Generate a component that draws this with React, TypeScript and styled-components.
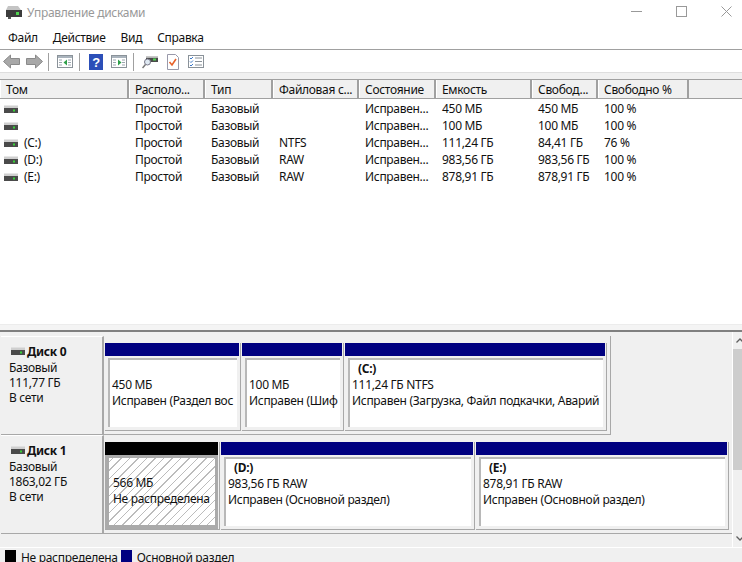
import React from "react";
import styled, { createGlobalStyle } from "styled-components";

const Global = createGlobalStyle`
  html, body { margin: 0; padding: 0; background: #fff; }
  body { width: 742px; height: 562px; overflow: hidden; font-family: "Noto Sans", "Open Sans", sans-serif; font-size: 12px; letter-spacing: -0.3px; color: #111; }
  * { box-sizing: border-box; }
`;

const Page = styled.div`
  width: 742px; height: 562px; display: flex; flex-direction: column; overflow: hidden;
`;
const TitleBar = styled.div`
  height: 27px; display: flex; align-items: center; padding-left: 6px; gap: 5px; color: #999; flex: none; overflow: hidden;
`;
const TitleText = styled.span` flex: 1; margin-top: -3px; `;
const WinButtons = styled.div`
  display: flex; align-items: center; margin-top: -5px; margin-right: -7px; flex: none;
`;
const WinButton = styled.div`
  width: 45px; height: 20px; display: flex; align-items: center; justify-content: center;
`;
const MenuBar = styled.div`
  height: 23px; display: flex; align-items: center; gap: 15px; padding: 0 0 2px 8px; border-bottom: 1px solid #a0a0a0; flex: none;
`;
const ToolBar = styled.div`
  height: 22px; display: flex; align-items: center; padding: 1px 0 0 3px; flex: none;
`;
const ToolSep = styled.div<{ $m?: number }>`
  width: 1px; height: 18px; background: #a0a0a0; margin: 0 ${(p) => p.$m ?? 6}px;
`;
const ToolIcon = styled.svg<{ $l?: number }>`
  flex: none; margin-left: ${(p) => p.$l ?? 0}px; display: block;
`;
const Band = styled.div`
  height: 8px; background: #f0f0f0; border-top: 1px solid #dedede; flex: none; border-bottom: 1px solid #a0a0a0;
`;
const TableArea = styled.div`
  height: 244px; flex: none; background: #fff;
`;
const HeaderRow = styled.div`
  height: 19px; display: flex; background: #f0f0f0; border-bottom: 1px solid #a0a0a0; margin-bottom: 1px;
`;
const HeaderCell = styled.div<{ $w: number }>`
  width: ${(p) => p.$w}px; flex: none; padding: 1px 0 0 5px; line-height: 18px; white-space: nowrap; overflow: hidden;
  border-right: 2px solid #a0a0a0; border-left: 1px solid #fff;
`;
const HeaderRest = styled.div` flex: 1; `;
const Row = styled.div`
  height: 17px; display: flex; align-items: center;
`;
const Cell = styled.div<{ $w: number }>`
  width: ${(p) => p.$w}px; flex: none; padding: 1px 0 0 6px; white-space: nowrap; overflow: hidden; line-height: 16px;
`;
const VolCell = styled(Cell)`
  display: flex; align-items: center; gap: 6px; padding-left: 4px;
`;
const Splitter = styled.div`
  height: 8px; background: #f4f4f4; border-top: 1px solid #ececec; border-bottom: 2px solid #808080; flex: none;
`;
const DiskPanel = styled.div`
  height: 216px; flex: none; background: #f0f0f0; display: flex; border-bottom: 1px solid #fff;
`;
const DiskList = styled.div`
  width: 732px; flex: none; padding-top: 4px; display: flex; flex-direction: column;
`;
const DiskRow = styled.div`
  height: 99px; display: flex; flex: none; padding-left: 1px;
`;
const DiskInfo = styled.div`
  width: 103px; flex: none; background: #f0f0f0; border-top: 1px solid #fff; border-right: 2px solid #a8a8a8; border-bottom: 1px solid #a8a8a8;
  padding: 7px 0 0 8px; line-height: 15px;
`;
const DiskName = styled.div`
  display: flex; align-items: center; gap: 2px; font-weight: 700; padding-left: 2px; margin-bottom: 1px;
`;
const Parts = styled.div<{ $open?: boolean }>`
  display: flex; gap: 1px; padding: 7px 3px 3px 1px; align-self: stretch;
  flex: ${(p) => (p.$open ? 1 : "none")};
  border-right: ${(p) => (p.$open ? "none" : "1px solid #a8a8a8")};
  border-bottom: 1px solid #a8a8a8;
`;
const Part = styled.div<{ $w: number }>`
  width: ${(p) => p.$w}px; flex: none; display: flex; flex-direction: column; background: #f0f0f0;
  border-right: 1px solid #a8a8a8; border-bottom: 1px solid #a8a8a8;
`;
const PartBar = styled.div<{ $c: string }>`
  height: 13px; background: ${(p) => p.$c}; flex: none; margin-right: 1px;
`;
const PartBody = styled.div`
  flex: 1; margin: 2px 3px 3px 3px; background: #fff; border-top: 2px solid #b8b8b8; border-left: 2px solid #b8b8b8;
  padding: 1px 0 0 2px; line-height: 16px; white-space: nowrap; overflow: hidden; display: flex; flex-direction: column;
`;
const FreeBody = styled.div`
  flex: 1; border: 3px solid #aaaaaa; border-left-width: 4px; margin-right: 1px; border-bottom-width: 4px;
  background: repeating-linear-gradient(-45deg, #fff 0, #fff 5px, #bcbcbc 5px, #bcbcbc 6px);
  padding: 17px 0 0 4px; line-height: 16px; white-space: nowrap; display: flex; flex-direction: column;
`;
const DriveLabel = styled.div`
  font-weight: 700; padding-left: 6px; min-height: 16px;
`;
const Scroll = styled.div`
  width: 10px; flex: none; border-left: 1px solid #fff; display: flex; flex-direction: column; background: #f0f0f0; overflow: hidden;
`;
const ScrollBtn = styled.div`
  height: 17px; flex: none; display: flex; align-items: center; padding-left: 3px;
`;
const ArrowGlyph = styled.svg` flex: none; `;
const Thumb = styled.div`
  height: 121px; flex: none; background: #cdcdcd;
`;
const ScrollGap = styled.div` flex: 1; `;
const Legend = styled.div`
  flex: 1; background: #f0f0f0; display: flex; align-items: flex-start; padding: 2px 0 0 5px; line-height: 16px;
`;
const Swatch = styled.span<{ $c: string; $l?: number }>`
  width: 11px; height: 13px; background: ${(p) => p.$c}; flex: none; margin-right: 5px; margin-left: ${(p) => p.$l ?? 0}px;
`;

const DriveIcon = () => (
  <svg width="14" height="9" viewBox="0 0 14 9">
    <rect x="0" y="0.5" width="14" height="2.5" fill="#cfcfcf" />
    <rect x="0" y="3" width="14" height="5" fill="#4a4a4a" />
    <rect x="9" y="4.5" width="2" height="2" fill="#36d436" />
  </svg>
);

const ArrowIcon = ({ flip, l }: { flip?: boolean; l?: number }) => (
  <ToolIcon $l={l} width="17" height="15" viewBox="0 0 17 15" style={flip ? { transform: "scaleX(-1)" } : undefined}>
    <path d="M0.5 7.5 7.5 1V4.5h9v6h-9V14z" fill="#a8a8a8" stroke="#8a8a8a" />
  </ToolIcon>
);

const PaneIcon = ({ right, l }: { right?: boolean; l?: number }) => (
  <ToolIcon $l={l} width="16" height="15" viewBox="0 0 16 15">
    <rect x="0.5" y="1.5" width="15" height="12" fill="#fff" stroke="#8a9299" />
    <rect x="1" y="2" width="14" height="2" fill="#aab4bd" />
    <path d="M2 6h3M2 8.5h3M2 11h3M11 6h3M11 8.5h3M11 11h3" stroke="#9aa5ae" />
    <path d={right ? "M7 5.5v6l3.5-3z" : "M10 5.5v6l-3.5-3z"} fill="#2fa04a" />
  </ToolIcon>
);

const columns = [129, 76, 68, 86, 77, 96, 66, 91];
const headers = ["Том", "Располо...", "Тип", "Файловая с...", "Состояние", "Емкость", "Свобод...", "Свободно %"];
const rows = [
  ["", "Простой", "Базовый", "", "Исправен...", "450 МБ", "450 МБ", "100 %"],
  ["", "Простой", "Базовый", "", "Исправен...", "100 МБ", "100 МБ", "100 %"],
  ["(C:)", "Простой", "Базовый", "NTFS", "Исправен...", "111,24 ГБ", "84,41 ГБ", "76 %"],
  ["(D:)", "Простой", "Базовый", "RAW", "Исправен...", "983,56 ГБ", "983,56 ГБ", "100 %"],
  ["(E:)", "Простой", "Базовый", "RAW", "Исправен...", "878,91 ГБ", "878,91 ГБ", "100 %"],
];

export default function App() {
  return (
    <Page>
      <Global />
      <TitleBar>
        <svg width="16" height="15" viewBox="0 0 16 15" style={{ marginTop: -3 }}>
          <path d="M2 1h10l3 4H0z" fill="#c4c4c4" />
          <rect x="0" y="5" width="16" height="7" fill="#3c3c3c" />
          <rect x="10" y="7" width="3" height="3" fill="#4fd44f" />
          <rect x="2" y="12" width="3" height="2" fill="#555" />
        </svg>
        <TitleText>Управление дисками</TitleText>
        <WinButtons>
          <WinButton>
            <svg width="11" height="11" viewBox="0 0 11 11"><path d="M0 5.5h11" stroke="#999" /></svg>
          </WinButton>
          <WinButton>
            <svg width="11" height="11" viewBox="0 0 11 11"><rect x="0.5" y="0.5" width="10" height="10" fill="none" stroke="#999" /></svg>
          </WinButton>
          <WinButton>
            <svg width="11" height="11" viewBox="0 0 11 11"><path d="M0.5 0.5l10 10M10.5 0.5l-10 10" stroke="#999" /></svg>
          </WinButton>
        </WinButtons>
      </TitleBar>
      <MenuBar>
        <span>Файл</span><span>Действие</span><span>Вид</span><span>Справка</span>
      </MenuBar>
      <ToolBar>
        <ArrowIcon />
        <ArrowIcon flip l={6} />
        <ToolSep $m={5} />
        <PaneIcon l={3} />
        <ToolSep />
        <ToolIcon $l={3} width="14" height="16" viewBox="0 0 14 16">
          <rect width="14" height="16" fill="#2c4fb8" />
          <text x="7" y="13" textAnchor="middle" fontSize="13" fontWeight="700" fill="#fff" fontFamily="Liberation Sans">?</text>
        </ToolIcon>
        <PaneIcon right l={8} />
        <ToolSep />
        <ToolIcon $l={2} width="16" height="15" viewBox="0 0 16 15">
          <rect x="4" y="3.5" width="12" height="4.5" fill="#4a4a4a" />
          <rect x="4" y="2" width="12" height="1.5" fill="#c8c8c8" />
          <rect x="11" y="4.5" width="3" height="2" fill="#4fd44f" />
          <circle cx="5.5" cy="8" r="3" fill="#dfe9f2" stroke="#778" />
          <path d="M3.5 10.5 0.5 14" stroke="#777" strokeWidth="1.5" />
        </ToolIcon>
        <ToolIcon $l={9} width="12" height="16" viewBox="0 0 12 16">
          <path d="M0.5 0.5h8l3 3v12h-11z" fill="#fff" stroke="#99a" />
          <path d="M2.5 8l2.5 3 4-6" fill="none" stroke="#e8622a" strokeWidth="1.6" />
        </ToolIcon>
        <ToolIcon $l={9} width="16" height="13" viewBox="0 0 16 13">
          <rect x="0.5" y="0.5" width="15" height="12" fill="#fff" stroke="#8a9299" />
          <path d="M2 3l1 1 2-2M2 6.5l1 1 2-2M2 10l1 1 2-2" fill="none" stroke="#3a78c8" />
          <path d="M7 3h7M7 6.5h7M7 10h7" stroke="#8a9299" />
        </ToolIcon>
      </ToolBar>
      <Band />
      <TableArea>
        <HeaderRow>
          {headers.map((h, i) => <HeaderCell key={h} $w={columns[i]}>{h}</HeaderCell>)}
          <HeaderRest />
        </HeaderRow>
        {rows.map((r, i) => (
          <Row key={i}>
            <VolCell $w={columns[0]}><DriveIcon />{r[0]}</VolCell>
            {r.slice(1).map((c, j) => <Cell key={j} $w={columns[j + 1]}>{c}</Cell>)}
          </Row>
        ))}
      </TableArea>
      <Splitter />
      <DiskPanel>
        <DiskList>
          <DiskRow>
            <DiskInfo>
              <DiskName><DriveIcon />Диск 0</DiskName>
              <div>Базовый</div><div>111,77 ГБ</div><div>В сети</div>
            </DiskInfo>
            <Parts>
              <Part $w={136}>
                <PartBar $c="#000080" />
                <PartBody><DriveLabel /><div>450 МБ</div><div>Исправен (Раздел вос</div></PartBody>
              </Part>
              <Part $w={102}>
                <PartBar $c="#000080" />
                <PartBody><DriveLabel /><div>100 МБ</div><div>Исправен (Шиф</div></PartBody>
              </Part>
              <Part $w={262}>
                <PartBar $c="#000080" />
                <PartBody><DriveLabel>(C:)</DriveLabel><div>111,24 ГБ NTFS</div><div>Исправен (Загрузка, Файл подкачки, Аварий</div></PartBody>
              </Part>
            </Parts>
          </DiskRow>
          <DiskRow>
            <DiskInfo>
              <DiskName><DriveIcon />Диск 1</DiskName>
              <div>Базовый</div><div>1863,02 ГБ</div><div>В сети</div>
            </DiskInfo>
            <Parts $open>
              <Part $w={115}>
                <PartBar $c="#000000" />
                <FreeBody><div>566 МБ</div><div>Не распределена</div></FreeBody>
              </Part>
              <Part $w={254}>
                <PartBar $c="#000080" />
                <PartBody><DriveLabel>(D:)</DriveLabel><div>983,56 ГБ RAW</div><div>Исправен (Основной раздел)</div></PartBody>
              </Part>
              <Part $w={253}>
                <PartBar $c="#000080" />
                <PartBody><DriveLabel>(E:)</DriveLabel><div>878,91 ГБ RAW</div><div>Исправен (Основной раздел)</div></PartBody>
              </Part>
            </Parts>
          </DiskRow>
        </DiskList>
        <Scroll>
          <ScrollBtn>
            <ArrowGlyph width="8" height="5" viewBox="0 0 8 5"><path d="M0.5 4.5 4 1l3.5 3.5" fill="none" stroke="#606060" strokeWidth="1.3" /></ArrowGlyph>
          </ScrollBtn>
          <Thumb />
          <ScrollGap />
          <ScrollBtn>
            <ArrowGlyph width="8" height="5" viewBox="0 0 8 5"><path d="M0.5 0.5 4 4l3.5-3.5" fill="none" stroke="#606060" strokeWidth="1.3" /></ArrowGlyph>
          </ScrollBtn>
        </Scroll>
      </DiskPanel>
      <Legend>
        <Swatch $c="#000" /><span>Не распределена</span>
        <Swatch $c="#000080" $l={3} /><span>Основной раздел</span>
      </Legend>
    </Page>
  );
}
